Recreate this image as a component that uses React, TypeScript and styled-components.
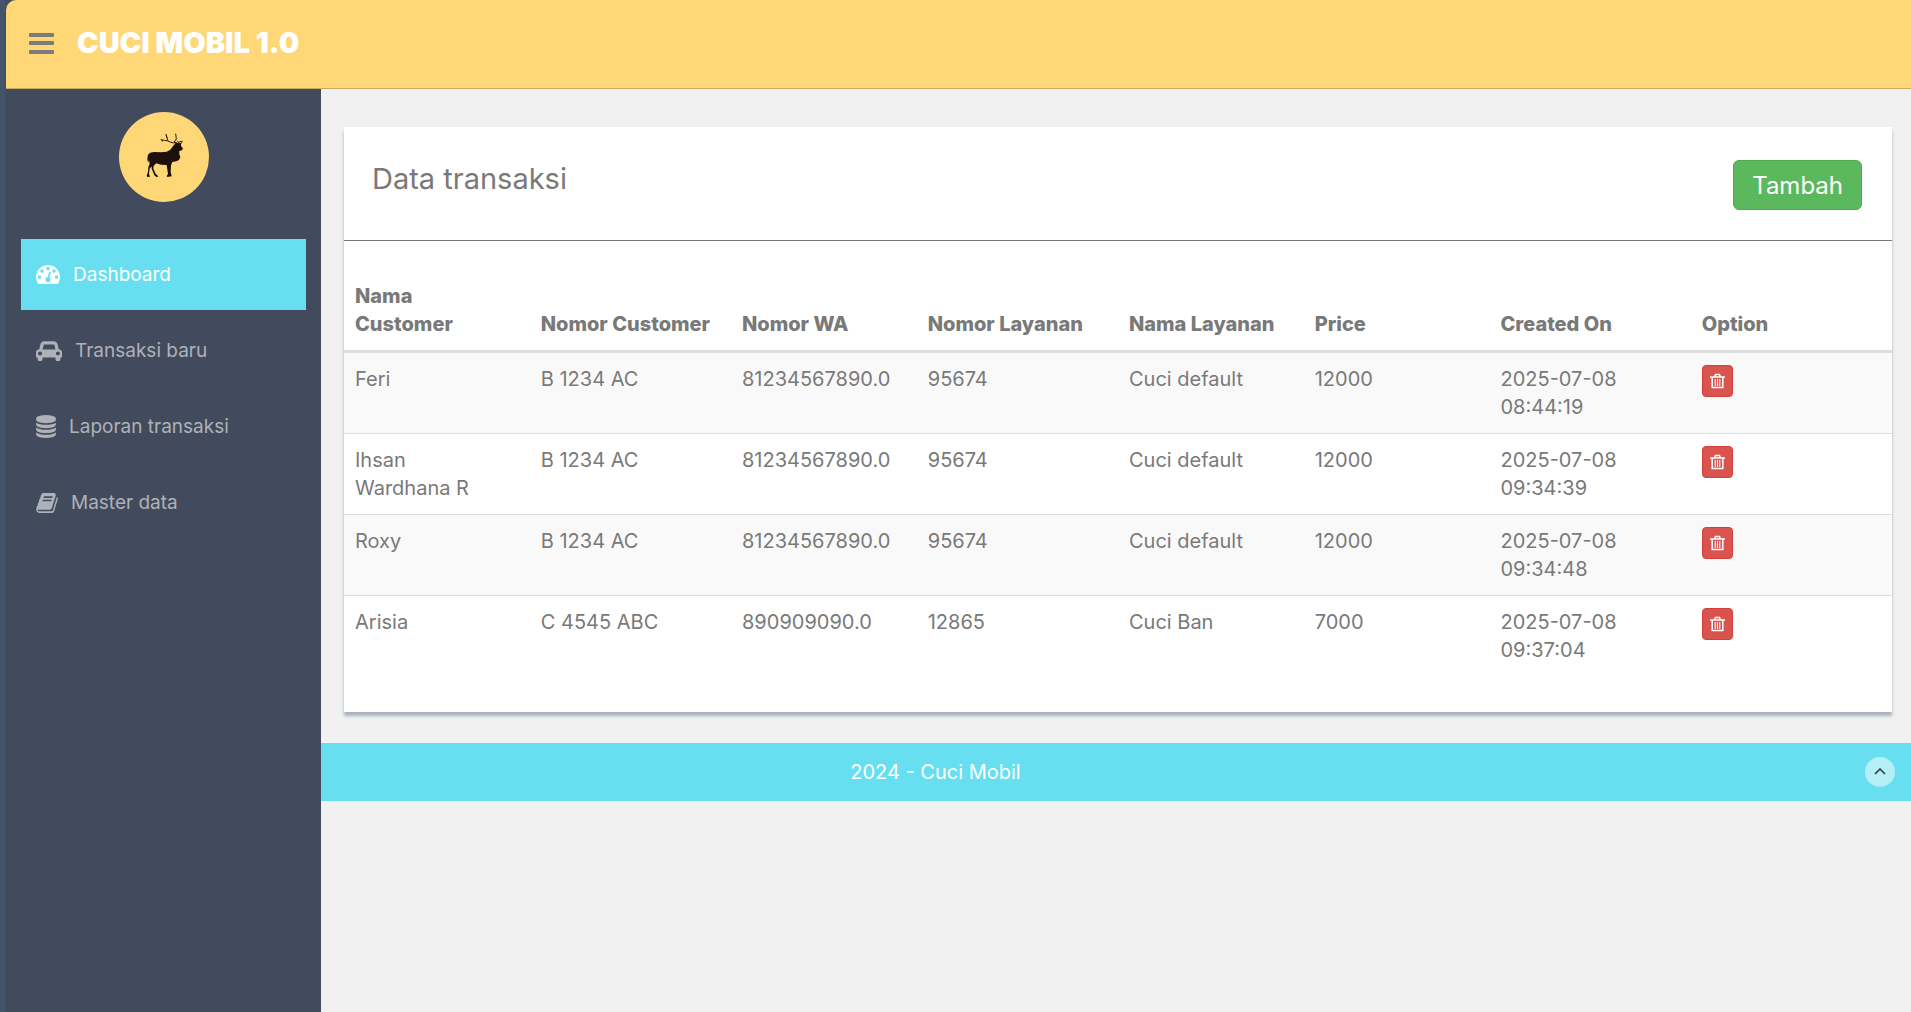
import React from "react";
import styled, { createGlobalStyle } from "styled-components";

const GlobalStyle = createGlobalStyle`
  *, *::before, *::after { box-sizing: border-box; }
  body {
    margin: 0;
    background: #f1f1f1;
    color: #797979;
    font-family: Inter, "Open Sans", sans-serif;
    font-size: 20px;
    line-height: 28px;
  }
  button { font-family: inherit; cursor: pointer; }
`;

const Page = styled.div`
  min-height: 100vh;
  display: flex;
  flex-direction: column;
  padding-left: 6px;
  background: linear-gradient(to right, #44546b 5px, #424c5e 5px);
`;

const Header = styled.header`
  display: flex;
  align-items: flex-start;
  gap: 22px;
  height: 89px;
  padding: 22px;
  background: #ffd777;
  border-bottom: 1px solid #c9aa5e;
  border-top-left-radius: 10px;
`;

const MenuButton = styled.button`
  display: flex;
  padding: 11px 0;
  border: 0;
  background: none;
  color: #7b7b7b;
`;

const Brand = styled.a`
  color: #fff;
  font-size: 29px;
  font-weight: 900;
  line-height: 42px;
  text-decoration: none;
`;

const Body = styled.div`
  flex: 1;
  display: flex;
`;

const Sidebar = styled.aside`
  flex: 0 0 315px;
  padding: 23px 15px;
  background: #424a5d;
`;

const Avatar = styled.a`
  display: block;
  width: 90px;
  height: 90px;
  margin: 0 auto 37px;
  border-radius: 50%;
  background: #ffd777;
`;

const Nav = styled.nav`
  display: flex;
  flex-direction: column;
  gap: 5px;
`;

const NavLink = styled.a<{ $active?: boolean }>`
  display: flex;
  align-items: center;
  gap: 13px;
  height: 71px;
  padding: 0 15px;
  background: ${(p) => (p.$active ? "#68dff0" : "transparent")};
  color: ${(p) => (p.$active ? "#fff" : "#aeb2b7")};
  font-size: 19px;
  text-decoration: none;
`;

const Content = styled.div`
  flex: 1;
  min-width: 0;
  background: #f1f1f1;
`;

const Main = styled.main`
  padding: 38px 19px 31px 23px;
`;

const Card = styled.section`
  padding-bottom: 36px;
  background: #fff;
  box-shadow: 0 4px 3px #aab2bd;
`;

const CardHeader = styled.div`
  display: flex;
  align-items: flex-start;
  justify-content: space-between;
  padding: 33px 30px 30px 28px;
  border-bottom: 1px solid #797979;
`;

const CardTitle = styled.h1`
  margin: 0;
  font-size: 29px;
  font-weight: 400;
  line-height: 38px;
`;

const AddButton = styled.button`
  height: 50px;
  padding: 0 18px;
  border: 1px solid #4cae4c;
  border-radius: 6px;
  background: #5cb85c;
  color: #fff;
  font-size: 24px;
`;

const Table = styled.table`
  width: 100%;
  margin-top: 29px;
  border-collapse: separate;
  border-spacing: 0;
  table-layout: fixed;

  th:first-child, td:first-child { padding-right: 32px; }
`;

const HeadCell = styled.th<{ $width: number }>`
  width: ${(p) => p.$width}%;
  padding: 12px 11px;
  border-bottom: 3px solid #ddd;
  font-weight: 800;
  text-align: left;
  vertical-align: bottom;
`;

const Row = styled.tr`
  &:nth-child(odd) { background: #f9f9f9; }
  &:nth-child(even) { background: #fff; }
  &:not(:first-child) td { border-top: 1px solid #ddd; }
`;

const Cell = styled.td`
  padding: 12px 11px;
  vertical-align: top;
`;

const DeleteButton = styled.button`
  display: flex;
  align-items: center;
  justify-content: center;
  width: 31px;
  height: 32px;
  padding: 0;
  border: 1px solid #d43f3a;
  border-radius: 4px;
  background: #d9534f;
  color: #fff;
`;

const Footer = styled.footer`
  display: grid;
  grid-template-columns: 1fr 345px;
  align-items: center;
  height: 58px;
  padding-right: 16px;
  background: #68dff0;
  color: #fff;
  text-align: center;
`;

const TopLink = styled.a`
  display: flex;
  align-items: center;
  justify-content: center;
  justify-self: end;
  width: 30px;
  height: 30px;
  border-radius: 50%;
  background: rgba(255, 255, 255, 0.5);
  color: #2f3d49;
`;

type GlyphProps = { width: number; height: number; viewBox: string; d: string };

const Glyph = ({ width, height, viewBox, d }: GlyphProps) => (
  <svg width={width} height={height} viewBox={viewBox} fill="currentColor" aria-hidden="true">
    <path d={d} />
  </svg>
);

const gauge: GlyphProps = {
  width: 24,
  height: 19,
  viewBox: "0 256 1792 1408",
  d: "M384 1152q0-53-37.5-90.5T256 1024t-90.5 37.5T128 1152t37.5 90.5T256 1280t90.5-37.5T384 1152zm192-448q0-53-37.5-90.5T448 576t-90.5 37.5T320 704t37.5 90.5T448 832t90.5-37.5T576 704zm428 481 101-382q6-26-7.5-48.5T1059 725t-48 6.5-30 39.5L880 1154q-60 5-107 43.5t-63 98.5q-20 77 20 146t117 89 146-20 89-117q16-60-6-117t-72-91zm660-33q0-53-37.5-90.5T1536 1024t-90.5 37.5T1408 1152t37.5 90.5 90.5 37.5 90.5-37.5 37.5-90.5zm-640-640q0-53-37.5-90.5T896 384t-90.5 37.5T768 512t37.5 90.5T896 640t90.5-37.5T1024 512zm448 192q0-53-37.5-90.5T1344 576t-90.5 37.5T1216 704t37.5 90.5T1344 832t90.5-37.5T1472 704zm320 448q0 261-141 483-19 29-54 29H195q-35 0-54-29Q0 1414 0 1152q0-182 71-348t191-286 286-191 348-71 348 71 286 191 191 286 71 348z",
};

const car: GlyphProps = {
  width: 26,
  height: 20,
  viewBox: "0 128 2048 1536",
  d: "M480 1088q0-66-47-113t-113-47-113 47-47 113 47 113 113 47 113-47 47-113zm36-320h1016l-89-357q-2-8-14-17.5t-21-9.5H640q-9 0-21 9.5T605 411zm1372 320q0-66-47-113t-113-47-113 47-47 113 47 113 113 47 113-47 47-113zm160-96v384q0 14-9 23t-23 9h-96v128q0 80-56 136t-136 56-136-56-56-136v-128H512v128q0 80-56 136t-136 56-136-56-56-136v-128H32q-14 0-23-9t-9-23V992q0-93 65.5-158.5T224 768h28l105-419q23-94 104-157.5T640 128h768q98 0 179 63.5T1691 349l105 419h28q93 0 158.5 65.5T2048 992z",
};

const database: GlyphProps = {
  width: 20,
  height: 23,
  viewBox: "0 0 1536 1792",
  d: "M768 768q237 0 443-43t325-127v170q0 69-103 128t-280 93.5-385 34.5-385-34.5T103 896 0 768V598q119 84 325 127t443 43zm0 768q237 0 443-43t325-127v170q0 69-103 128t-280 93.5-385 34.5-385-34.5-280-93.5T0 1536v-170q119 84 325 127t443 43zm0-384q237 0 443-43t325-127v170q0 69-103 128t-280 93.5-385 34.5-385-34.5-280-93.5T0 1152V982q119 84 325 127t443 43zM768 0q208 0 385 34.5t280 93.5 103 128v128q0 69-103 128t-280 93.5T768 640t-385-34.5T103 512 0 384V256q0-69 103-128t280-93.5T768 0z",
};

const book: GlyphProps = {
  width: 22,
  height: 20,
  viewBox: "0 128 1664 1536",
  d: "M1639 478q40 57 18 129l-275 906q-19 64-76.5 107.5T1183 1664H260q-77 0-148.5-53.5T12 1479q-24-67-2-127 0-4 3-27t4-37q1-8-3-21.5t-3-19.5q2-11 8-21t16.5-23.5T52 1179q23-38 45-91.5t30-91.5q3-10 .5-30t-.5-28q3-11 17-28t17-23q21-36 42-92t25-90q1-9-2.5-32t.5-28q4-13 22-30.5t22-22.5q19-26 42.5-84.5T340 411q1-8-3-25.5t-2-26.5q2-8 9-18t18-23 17-21q8-12 16.5-30.5t15-35 16-36 19.5-32 26.5-23.5 36-11.5T556 134l-1 3q38-9 51-9h761q74 0 114 56t18 130l-274 906q-36 119-71.5 153.5T1025 1408H156q-27 0-38 15-11 16-1 43 24 70 144 70h923q29 0 56-15.5t35-41.5l300-987q7-22 5-57 38 15 59 43zm-1064 2q-4 13 2 22.5t20 9.5h608q13 0 25.5-9.5T1247 480l21-64q4-13-2-22.5t-20-9.5H638q-13 0-25.5 9.5T596 416zm-83 256q-4 13 2 22.5t20 9.5h608q13 0 25.5-9.5T1164 736l21-64q4-13-2-22.5t-20-9.5H555q-13 0-25.5 9.5T513 672z",
};

const TrashIcon = () => (
  <svg width="15" height="16" viewBox="0 0 15 16" fill="none" stroke="#fff" aria-hidden="true">
    <path d="M0 4H15M2.2 4V14.5H12.8V4M4.5 4L5.5 1.5H9.5L10.5 4" strokeWidth="1.5" />
    <path d="M5.2 6V13M7.5 6V13M9.8 6V13" strokeWidth="1.1" />
  </svg>
);

const ElkLogo = () => (
  <svg width="90" height="90" viewBox="27 36 270 270" aria-hidden="true">
    <path
      fill="#1c110b"
      d="M191 136L197 129L190 125L198 127L207 130L216 127L213 133L213 138L219 145L216 151L208 153L208 162L211 172L207 180L199 184L187 186L183 196L182 216L185 229L172 231L170 228L174 222L170 195L153 194L139 190L131 197L130 206L137 221L145 229L140 232L133 226L125 206L125 199L119 206L117 222L120 230L112 231L110 227L114 216L115 202L119 191L117 181L114 188L112 176L114 164L120 158L132 156L153 157L170 155L181 149Z"
    />
    <path
      d="M199 129L186 128L171 122L152 119M155 119L158 125M174 123L168 103L171 114M199 129L193 125M192 127L199 117L197 101M205 130L210 124L218 125M206 128L202 122"
      fill="none"
      stroke="#2b210c"
      strokeWidth="3"
      strokeLinejoin="round"
    />
  </svg>
);

const navItems = [
  { label: "Dashboard", icon: gauge, active: true },
  { label: "Transaksi baru", icon: car },
  { label: "Laporan transaksi", icon: database },
  { label: "Master data", icon: book },
];

const columns = [
  { label: "Nama Customer", width: 12 },
  { label: "Nomor Customer", width: 13 },
  { label: "Nomor WA", width: 12 },
  { label: "Nomor Layanan", width: 13 },
  { label: "Nama Layanan", width: 12 },
  { label: "Price", width: 12 },
  { label: "Created On", width: 13 },
  { label: "Option", width: 13 },
];

const rows = [
  ["Feri", "B 1234 AC", "81234567890.0", "95674", "Cuci default", "12000", "2025-07-08 08:44:19"],
  ["Ihsan Wardhana\u00a0R", "B 1234 AC", "81234567890.0", "95674", "Cuci default", "12000", "2025-07-08 09:34:39"],
  ["Roxy", "B 1234 AC", "81234567890.0", "95674", "Cuci default", "12000", "2025-07-08 09:34:48"],
  ["Arisia", "C 4545 ABC", "890909090.0", "12865", "Cuci Ban", "7000", "2025-07-08 09:37:04"],
];

export default function App() {
  return (
    <>
      <GlobalStyle />
      <Page id="top">
        <Header>
          <MenuButton type="button" aria-label="Toggle navigation">
            <svg width="27" height="21" viewBox="0 0 27 21" fill="currentColor" aria-hidden="true">
              <rect x="1" y="0" width="25" height="4" rx="1" />
              <rect x="1" y="8" width="25" height="4" rx="1" />
              <rect x="1" y="17" width="25" height="4" rx="1" />
            </svg>
          </MenuButton>
          <Brand href="#top">CUCI MOBIL 1.0</Brand>
        </Header>
        <Body>
          <Sidebar>
            <Avatar href="#profile" aria-label="Profile">
              <ElkLogo />
            </Avatar>
            <Nav>
              {navItems.map((item) => (
                <NavLink key={item.label} href="#menu" $active={item.active}>
                  <Glyph {...item.icon} />
                  {item.label}
                </NavLink>
              ))}
            </Nav>
          </Sidebar>
          <Content>
            <Main>
              <Card>
                <CardHeader>
                  <CardTitle>Data transaksi</CardTitle>
                  <AddButton type="button">Tambah</AddButton>
                </CardHeader>
                <Table>
                  <thead>
                    <tr>
                      {columns.map((c) => (
                        <HeadCell key={c.label} scope="col" $width={c.width}>
                          {c.label}
                        </HeadCell>
                      ))}
                    </tr>
                  </thead>
                  <tbody>
                    {rows.map((row) => (
                      <Row key={row[0]}>
                        {row.map((value, i) => (
                          <Cell key={columns[i].label}>{value}</Cell>
                        ))}
                        <Cell>
                          <DeleteButton type="button" aria-label={`Delete ${row[0]}`}>
                            <TrashIcon />
                          </DeleteButton>
                        </Cell>
                      </Row>
                    ))}
                  </tbody>
                </Table>
              </Card>
            </Main>
            <Footer>
              <span>2024 - Cuci Mobil</span>
              <TopLink href="#top" aria-label="Back to top">
                <svg width="12" height="8" viewBox="0 0 12 8" fill="none" stroke="currentColor" strokeWidth="1.6" aria-hidden="true">
                  <path d="M1 6L6 1L11 6" />
                </svg>
              </TopLink>
            </Footer>
          </Content>
        </Body>
      </Page>
    </>
  );
}
